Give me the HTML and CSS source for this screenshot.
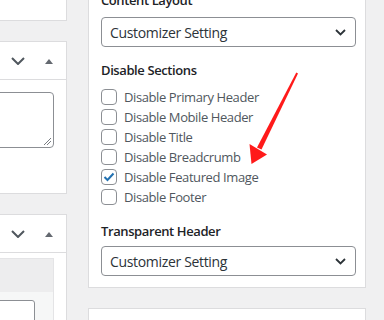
FILE: index.html
```html
<!DOCTYPE html>
<html>
<head>
<meta charset="utf-8">
<link rel="stylesheet" href="styles.css">
</head>
<body>
<div class="page">
  <div class="left">
    <div class="lpanel p1"></div>
    <div class="lpanel p2">
      <div class="lhead">
        <svg class="chev" width="14" height="8" viewBox="0 0 14 8"><path d="M1 1 L7 7 L13 1" fill="none" stroke="#50575e" stroke-width="2"/></svg>
        <svg class="tri" width="8" height="5" viewBox="0 0 8 5"><path d="M0 5 L4 0 L8 5 Z" fill="#646970"/></svg>
      </div>
      <div class="lbody">
        <div class="textarea">
          <svg class="grip" width="8" height="8" viewBox="0 0 8 8"><path d="M1 8 L8 1 M4 8 L8 4" stroke="#787c82" stroke-width="1"/></svg>
        </div>
      </div>
    </div>
    <div class="lpanel p3">
      <div class="lhead">
        <svg class="chev" width="14" height="8" viewBox="0 0 14 8"><path d="M1 1 L7 7 L13 1" fill="none" stroke="#50575e" stroke-width="2"/></svg>
        <svg class="tri" width="8" height="5" viewBox="0 0 8 5"><path d="M0 5 L4 0 L8 5 Z" fill="#646970"/></svg>
      </div>
      <div class="lbody3">
        <div class="greybox">
          <div class="greytop"></div>
          <div class="lightarea"><div class="input"></div></div>
        </div>
      </div>
    </div>
  </div>
  <div class="right">
    <div class="rpanel">
      <div class="label l1">Content Layout</div>
      <div class="select s1"><span>Customizer Setting</span>
        <svg width="11" height="7" viewBox="0 0 11 7"><path d="M1 1 L5.5 5.5 L10 1" fill="none" stroke="#2c3338" stroke-width="1.8"/></svg>
      </div>
      <div class="label l2">Disable Sections</div>
      <div class="checks">
        <label class="row"><span class="cb"></span>Disable Primary Header</label>
        <label class="row"><span class="cb"></span>Disable Mobile Header</label>
        <label class="row"><span class="cb"></span>Disable Title</label>
        <label class="row"><span class="cb"></span>Disable Breadcrumb</label>
        <label class="row"><span class="cb on"><svg width="12" height="10" viewBox="0 0 12 10"><path d="M1.5 5 L4.5 8 L10.5 1.5" fill="none" stroke="#2271b1" stroke-width="2"/></svg></span>Disable Featured Image</label>
        <label class="row"><span class="cb"></span>Disable Footer</label>
      </div>
      <div class="label l3">Transparent Header</div>
      <div class="select s2"><span>Customizer Setting</span>
        <svg width="11" height="7" viewBox="0 0 11 7"><path d="M1 1 L5.5 5.5 L10 1" fill="none" stroke="#2c3338" stroke-width="1.8"/></svg>
      </div>
    </div>
    <div class="rpanel2"></div>
  </div>
  <svg class="arrow" width="384" height="320" viewBox="0 0 384 320">
    <path d="M296.3 72.5 L298 73.5 L261.5 149.5 L257 147.5 Z" fill="#ff1a1a"/>
    <path d="M249.5 144 L267 154.5 L251.5 164 Z" fill="#ff1a1a"/>
  </svg>
</div>
</body>
</html>
```
FILE: styles.css
```css
* { box-sizing: border-box; }
html, body { margin: 0; padding: 0; }
body {
  background: #f0f0f1;
  font-family: "Open Sans", "Noto Sans", sans-serif;
  width: 384px;
  height: 320px;
  overflow: hidden;
}
.page {
  position: relative;
  display: flex;
  align-items: flex-start;
  width: 384px;
  height: 320px;
}
.left {
  flex: none;
  width: 267px;
  margin-left: -200px;
  margin-top: -40px;
  display: flex;
  flex-direction: column;
  gap: 20px;
}
.lpanel {
  background: #fff;
  border: 1px solid #dcdcde;
}
.p1 { height: 61px; }
.p2 { height: 153px; }
.p3 { height: 200px; }
.lhead {
  height: 38px;
  border-bottom: 1px solid #dcdcde;
  display: flex;
  justify-content: flex-end;
  align-items: center;
  padding-right: 13px;
}
.lhead .chev { margin-right: 20px; margin-top: 1px; }
.lhead .tri { margin-top: 1px; }
.lbody { padding: 12px 12px 0 0; display: flex; justify-content: flex-end; }
.textarea {
  width: 250px;
  height: 56px;
  border: 1px solid #8c8f94;
  border-radius: 4px;
  position: relative;
}
.grip { position: absolute; right: 2px; bottom: 2px; }
.lbody3 { padding: 5px 12px 0 0; display: flex; justify-content: flex-end; }
.greybox {
  width: 250px;
  height: 80px;
  border: 1px solid #e4e4e6;
  background: #f6f7f7;
}
.greytop { height: 33px; background: #ededee; }
.lightarea { padding: 8px 18px 0 0; display: flex; justify-content: flex-end; }
.input {
  width: 220px;
  height: 40px;
  background: #fff;
  border: 1px solid #8c8f94;
  border-radius: 3px;
}
.right {
  flex: none;
  width: 278px;
  margin-left: 21px;
  display: flex;
  flex-direction: column;
  gap: 20px;
}
.rpanel {
  margin-top: -20px;
  background: #fff;
  border: 1px solid #dcdcde;
  padding: 10px 9px 11px 12px;
}
.rpanel2 {
  height: 60px;
  background: #fff;
  border: 1px solid #dcdcde;
}
.label {
  font-weight: 600;
  font-size: 13px;
  line-height: 18px;
  letter-spacing: -0.4px;
  color: #1d2327;
}
.l2 { margin-top: 14px; }
.l3 { margin-top: 15px; }
.select {
  height: 30px;
  border: 1px solid #8c8f94;
  border-radius: 4px;
  display: flex;
  align-items: center;
  justify-content: space-between;
  padding: 0 9px 0 8px;
  font-size: 14px;
  letter-spacing: -0.33px;
  color: #2c3338;
}
.s1 { margin-top: 8px; }
.s2 { margin-top: 6px; }
.checks { margin-top: 8px; }
.row {
  display: flex;
  align-items: center;
  height: 20px;
  font-size: 13px;
  letter-spacing: -0.4px;
  color: #50575e;
}
.cb {
  width: 16px;
  height: 16px;
  border: 1px solid #8c8f94;
  border-radius: 4px;
  margin-right: 7px;
  display: flex;
  align-items: center;
  justify-content: center;
  background: #fff;
}
.arrow {
  position: absolute;
  left: 0;
  top: 0;
  pointer-events: none;
}
```
